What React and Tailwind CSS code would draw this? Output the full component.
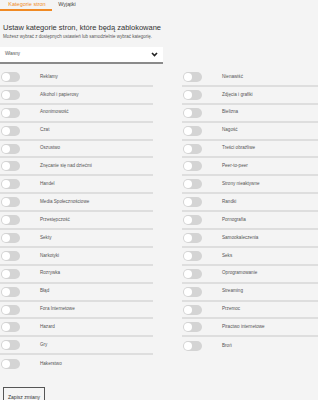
import { useState } from 'react';

const leftItems = [
  'Reklamy',
  'Alkohol i papierosy',
  'Anonimowość',
  'Czat',
  'Oszustwo',
  'Znęcanie się nad dziećmi',
  'Handel',
  'Media Społecznościowe',
  'Przestępczość',
  'Sekty',
  'Narkotyki',
  'Rozrywka',
  'Błąd',
  'Fora Internetowe',
  'Hazard',
  'Gry',
  'Hakerstwo',
];

const rightItems = [
  'Nienawiść',
  'Zdjęcia i grafiki',
  'Bielizna',
  'Nagość',
  'Treści obraźliwe',
  'Peer-to-peer',
  'Strony nieaktywne',
  'Randki',
  'Pornografia',
  'Samookaleczenia',
  'Seks',
  'Oprogramowanie',
  'Streaming',
  'Przemoc',
  'Piractwo internetowe',
  'Broń',
];

function Toggle({ on, onClick }) {
  return (
    <button
      onClick={onClick}
      className={`relative w-[19px] h-[10px] rounded-full shrink-0 ${on ? 'bg-[#f08a24]' : 'bg-[#d4d4d4]'}`}
    >
      <span
        className={`absolute top-[1px] w-[8px] h-[8px] rounded-full bg-white ${on ? 'left-[10px]' : 'left-[1px]'}`}
      />
    </button>
  );
}

function CategoryList({ items, state, onToggle }) {
  return (
    <div className="flex flex-col">
      {items.map((name, idx) => (
        <div
          key={name}
          className={`flex items-center h-[17.9px] ${idx < items.length - 1 ? 'border-b-2 border-[#dedede]' : ''}`}
        >
          <div className="w-[40px] pl-[1px] flex items-center">
            <Toggle on={!!state[name]} onClick={() => onToggle(name)} />
          </div>
          <span className="text-[4.6px] text-[#555] leading-none">{name}</span>
        </div>
      ))}
    </div>
  );
}

export default function App() {
  const [tab, setTab] = useState('categories');
  const [enabled, setEnabled] = useState({});

  const toggle = (name) => setEnabled({ ...enabled, [name]: !enabled[name] });

  return (
    <div
      className="w-[318px] h-[400px] overflow-hidden bg-[#f4f4f4]"
      style={{ fontFamily: '"Liberation Sans", Arial, sans-serif' }}
    >
      {/* Tabs */}
      <div className="flex h-[11px] items-stretch">
        <button
          onClick={() => setTab('categories')}
          className={`w-[52px] pl-[2px] text-[5.5px] leading-none border-b-2 ${tab === 'categories' ? 'text-[#f08a24] border-[#f08a24]' : 'text-[#444] border-transparent'}`}
        >
          Kategorie stron
        </button>
        <button
          onClick={() => setTab('exceptions')}
          className={`w-[30px] text-[5.5px] leading-none border-b-2 ${tab === 'exceptions' ? 'text-[#f08a24] border-[#f08a24]' : 'text-[#444] border-transparent'}`}
        >
          Wyjątki
        </button>
      </div>

      <div className="pl-[3px] pt-[13px]">
        <h1 className="text-[7.5px] leading-[8px] text-[#333]">
          Ustaw kategorie stron, które będą zablokowane
        </h1>
        <p className="mt-[2px] text-[4.5px] leading-[5px] text-[#555]">
          Możesz wybrać z dostępnych ustawień lub samodzielnie wybrać kategorię.
        </p>
      </div>

      {/* Select */}
      <div className="mt-[8px] w-[163px] h-[17px] bg-white border-b-2 border-[#8a8a8a] flex items-center justify-between pl-[5px] pr-[5px]">
        <span className="text-[4.6px] text-[#555] leading-none">Własny</span>
        <svg width="7" height="5" viewBox="0 0 7 5">
          <path d="M1 1 L3.5 3.6 L6 1" fill="none" stroke="#222" strokeWidth="1.6" />
        </svg>
      </div>

      {/* Categories */}
      <div className="mt-[5px] flex">
        <div className="w-[153px]">
          <CategoryList items={leftItems} state={enabled} onToggle={toggle} />
        </div>
        <div className="ml-[29px] flex-1">
          <CategoryList items={rightItems} state={enabled} onToggle={toggle} />
        </div>
      </div>

      <button className="mt-[14px] ml-[3px] w-[42px] h-[20px] border border-[#555] text-[5px] text-[#333] leading-none">
        Zapisz zmiany
      </button>
    </div>
  );
}
